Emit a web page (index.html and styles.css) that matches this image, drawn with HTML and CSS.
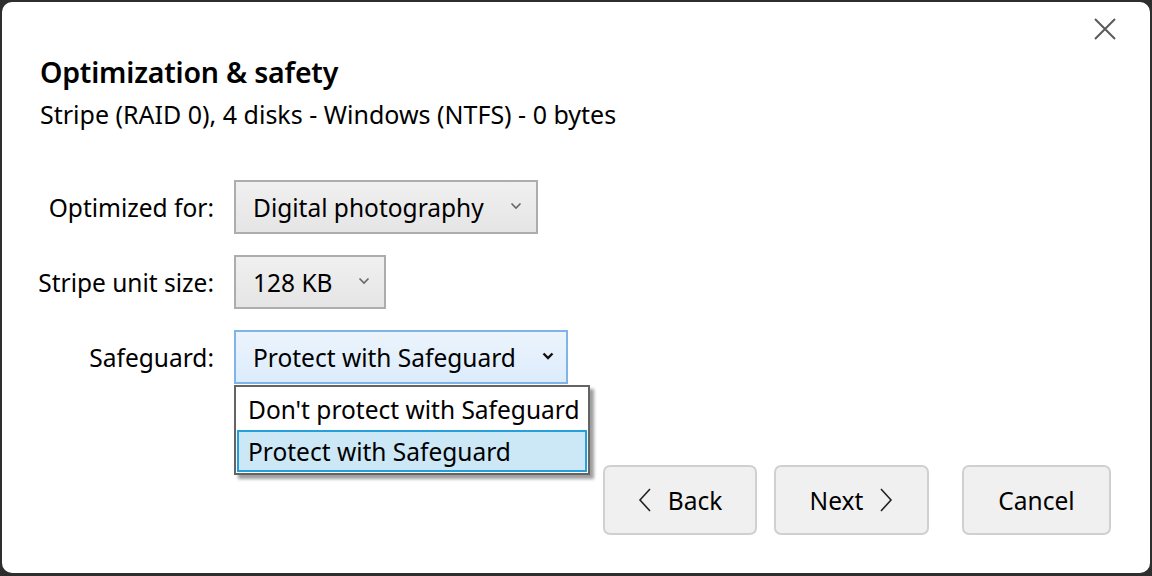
FILE: index.html
```html
<!DOCTYPE html>
<html>
<head>
<meta charset="utf-8">
<link rel="stylesheet" href="styles.css">
</head>
<body>
<div class="dialog">
  <button class="close" aria-label="Close">
    <svg width="22" height="22" viewBox="0 0 22 22"><path d="M1 1L21 21M21 1L1 21" stroke="#5a5a5a" stroke-width="2" fill="none"/></svg>
  </button>
  <div class="header">
    <h1 class="title">Optimization &amp; safety</h1>
    <p class="subtitle">Stripe (RAID 0), 4 disks - Windows (NTFS) - 0 bytes</p>
  </div>
  <div class="form">
    <div class="label">Optimized for:</div>
    <div class="combo combo-wide">
      <span>Digital photography</span>
      <svg class="chev" width="12" height="8" viewBox="0 0 12 8"><path d="M1.5 1.5L6 6L10.5 1.5" stroke="#666" stroke-width="1.6" fill="none"/></svg>
    </div>
    <div class="label">Stripe unit size:</div>
    <div class="combo combo-small">
      <span>128 KB</span>
      <svg class="chev" width="12" height="8" viewBox="0 0 12 8"><path d="M1.5 1.5L6 6L10.5 1.5" stroke="#666" stroke-width="1.6" fill="none"/></svg>
    </div>
    <div class="label">Safeguard:</div>
    <div class="combo-wrap">
      <div class="combo combo-active">
        <span>Protect with Safeguard</span>
        <svg class="chev" width="12" height="8" viewBox="0 0 12 8"><path d="M1.5 1.5L6 6L10.5 1.5" stroke="#111" stroke-width="2.4" fill="none"/></svg>
      </div>
      <ul class="list">
        <li class="item">Don't protect with Safeguard</li>
        <li class="item selected">Protect with Safeguard</li>
      </ul>
    </div>
  </div>
  <div class="buttons">
    <button class="btn btn-back">
      <svg width="14" height="24" viewBox="0 0 14 24"><path d="M12 1L2 12L12 23" stroke="#222" stroke-width="1.6" fill="none"/></svg>
      <span>Back</span>
    </button>
    <button class="btn btn-next">
      <span>Next</span>
      <svg width="14" height="24" viewBox="0 0 14 24"><path d="M2 1L12 12L2 23" stroke="#222" stroke-width="1.6" fill="none"/></svg>
    </button>
    <button class="btn btn-cancel"><span>Cancel</span></button>
  </div>
</div>
</body>
</html>
```
FILE: styles.css
```css
html, body {
  margin: 0;
  padding: 0;
  width: 1152px;
  height: 576px;
  overflow: hidden;
  background: #2e2e2e;
}
.dialog {
  position: relative;
  box-sizing: border-box;
  margin: 2px 2px 0 2px;
  width: 1148px;
  height: 571px;
  background: #ffffff;
  border-radius: 10px;
  font-family: "Noto Sans", "Open Sans", sans-serif;
  color: #000;
  display: flex;
  flex-direction: column;
  padding: 0 39px 0 38px;
}
.close {
  position: absolute;
  top: 16px;
  right: 34px;
  border: none;
  background: transparent;
  padding: 0;
  width: 22px;
  height: 22px;
}
.header {
  padding-top: 50px;
}
.title {
  margin: 0;
  font-size: 28.5px;
  font-weight: 600;
  line-height: 40px;
  letter-spacing: -0.2px;
}
.subtitle {
  margin: 2px 0 0 0;
  font-size: 25px;
  line-height: 40px;
}
.form {
  margin-top: 46px;
  display: grid;
  grid-template-columns: 174px auto;
  column-gap: 20px;
  row-gap: 21px;
  align-items: center;
  justify-items: start;
}
.label {
  justify-self: end;
  font-size: 24.5px;
  white-space: nowrap;
}
.combo {
  box-sizing: border-box;
  height: 54px;
  border: 2px solid #adadad;
  background: linear-gradient(#f0f0f0, #e5e5e5);
  display: flex;
  align-items: center;
  justify-content: space-between;
  padding: 0 14px 0 17px;
  font-size: 24.5px;
  white-space: nowrap;
}
.combo-wide { width: 304px; }
.combo-small { width: 152px; }
.combo-wrap {
  position: relative;
}
.combo-active {
  width: 334px;
  border-color: #7eb4ea;
  background: linear-gradient(#ecf4fc, #dcecfc);
  padding-right: 12px;
}
.chev { flex: none; margin-bottom: 2px; }
.list {
  position: absolute;
  left: 0;
  top: 55px;
  margin: 0;
  padding: 1px 0;
  list-style: none;
  box-sizing: border-box;
  width: 356px;
  background: #fff;
  border: 2px solid #646464;
  box-shadow: 4px 4px 3px rgba(0,0,0,0.38);
  z-index: 5;
}
.item {
  box-sizing: border-box;
  height: 42px;
  line-height: 40px;
  padding-left: 9px;
  font-size: 24.5px;
  border: 2px solid transparent;
  margin: 0 1px;
  white-space: nowrap;
}
.selected {
  background: #cce8f6;
  border-color: #26a0da;
}
.buttons {
  margin-top: auto;
  margin-bottom: 38px;
  display: flex;
  justify-content: flex-end;
}
.btn {
  box-sizing: border-box;
  height: 70px;
  border: 2px solid #d0d0d0;
  border-radius: 7px;
  background: #f0f0f0;
  font-family: "Noto Sans", "Open Sans", sans-serif;
  font-size: 24.5px;
  color: #000;
  display: flex;
  align-items: center;
  justify-content: center;
  gap: 16px;
  padding: 0;
}
.btn-back { width: 154px; margin-right: 17px; }
.btn-next { width: 155px; margin-right: 33px; }
.btn-cancel { width: 149px; }
```
